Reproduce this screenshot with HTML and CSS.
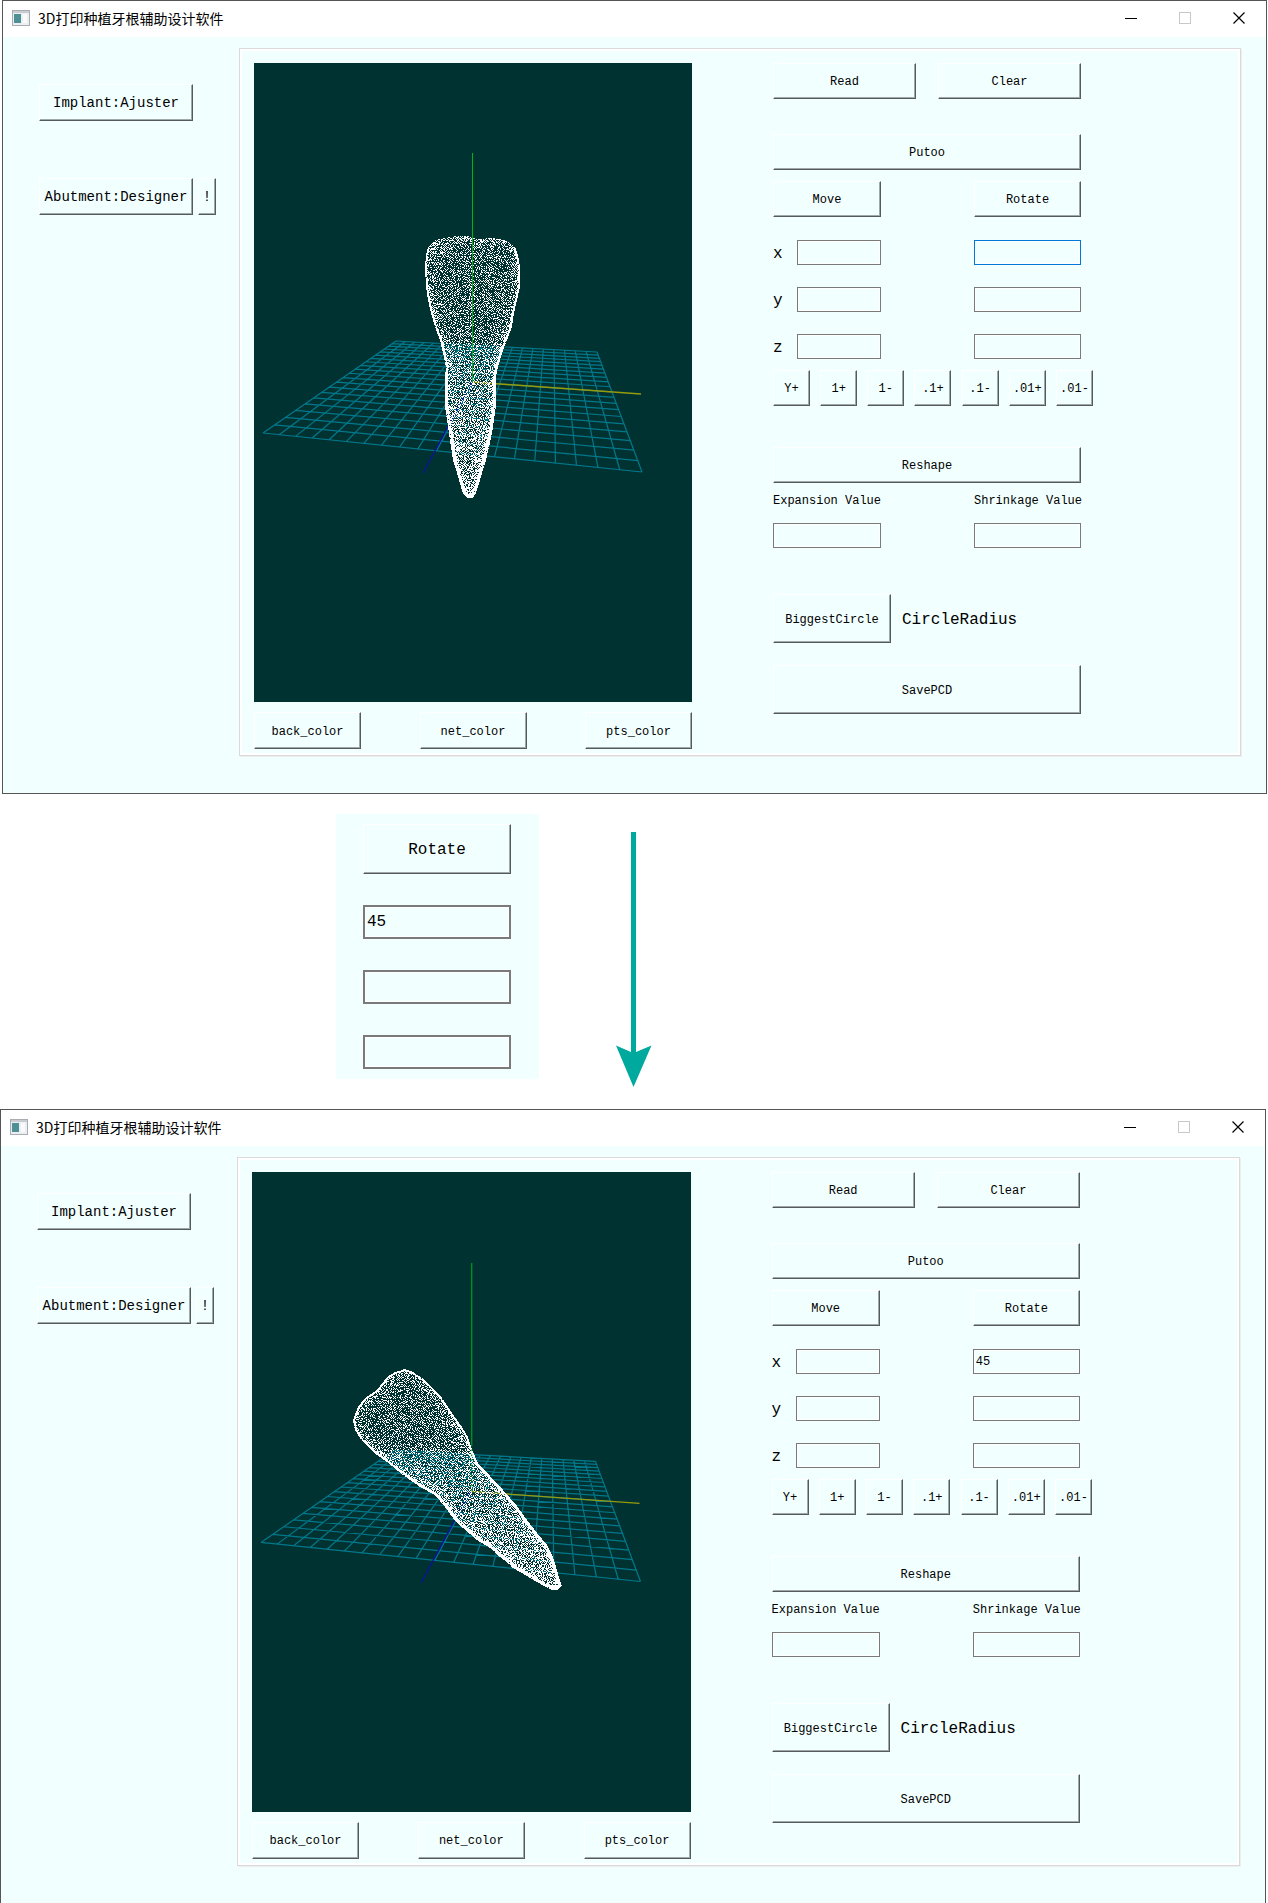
FILE: index.html
```html
<!DOCTYPE html>
<html lang="zh-CN">
<head>
<meta charset="utf-8">
<meta name="viewport" content="width=device-width, initial-scale=1">
<title>3D打印种植牙根辅助设计软件</title>
<link rel="stylesheet" href="styles.css">
</head>
<body>
<section class="window window-before">
  <header class="titlebar">
    <svg class="app-icon" viewBox="0 0 18 16" aria-hidden="true"><rect x="0.5" y="0.5" width="17" height="15" fill="#eceff1" stroke="#a9adb1"/><rect x="1" y="1" width="16" height="2" fill="#c9cdd1"/><rect x="2" y="4" width="7" height="9" fill="#4f8f96"/><rect x="11" y="4" width="4" height="9" fill="#fafafa"/></svg>
    <h1 class="title">3D打印种植牙根辅助设计软件</h1>
    <button class="caption" aria-label="Minimize"><svg viewBox="0 0 12 12"><path d="M0 6.5H12" stroke="#000"/></svg></button>
    <button class="caption" aria-label="Maximize" disabled><svg viewBox="0 0 12 12"><rect x="0.5" y="0.5" width="11" height="11" fill="none" stroke="#c8c8c8"/></svg></button>
    <button class="caption" aria-label="Close"><svg viewBox="0 0 12 12"><path d="M0.5 0.5L11.5 11.5M11.5 0.5L0.5 11.5" stroke="#000" stroke-width="1.2"/></svg></button>
  </header>
  <div class="window-body">
    <nav class="modules">
      <div class="module-row"><button class="btn module">Implant:Ajuster</button></div>
      <div class="module-row"><button class="btn module">Abutment:Designer</button><button class="btn hint">!</button></div>
    </nav>
    <main class="frame">
      <div class="viewer">
        <svg class="scene" data-tooth="upright" viewBox="0 0 438 639" role="img" aria-label="Tooth root point cloud"></svg>
        <div class="color-row">
          <button class="btn">back_color</button><button class="btn">net_color</button><button class="btn">pts_color</button>
        </div>
      </div>
      <div class="controls">
        <div class="file-row"><button class="btn">Read</button><button class="btn">Clear</button></div>
        <section class="group">
          <button class="btn wide">Putoo</button>
          <div class="pair"><button class="btn">Move</button><button class="btn">Rotate</button></div>
          <div class="axes">
            <div class="pair"><div class="axis"><label for="a-mx">x</label><input id="a-mx" class="field"></div><input class="field focused" aria-label="Rotate x"></div>
            <div class="pair"><div class="axis"><label for="a-my">y</label><input id="a-my" class="field"></div><input class="field" aria-label="Rotate y"></div>
            <div class="pair"><div class="axis"><label for="a-mz">z</label><input id="a-mz" class="field"></div><input class="field" aria-label="Rotate z"></div>
          </div>
          <div class="steps"><button class="btn">Y+</button><button class="btn">1+</button><button class="btn">1-</button><button class="btn">.1+</button><button class="btn">.1-</button><button class="btn">.01+</button><button class="btn">.01-</button></div>
        </section>
        <section class="reshape">
          <button class="btn wide">Reshape</button>
          <div class="pair values">
            <label class="value">Expansion Value<input class="field"></label>
            <label class="value">Shrinkage Value<input class="field"></label>
          </div>
        </section>
        <div class="circle-row"><button class="btn tall">BiggestCircle</button><span class="radius">CircleRadius</span></div>
        <button class="btn wide tall save">SavePCD</button>
      </div>
    </main>
  </div>
</section>

<section class="transition">
  <form class="rotate-card">
    <button type="button" class="btn large">Rotate</button>
    <input class="field large" aria-label="Rotate x" value="45">
    <input class="field large" aria-label="Rotate y">
    <input class="field large" aria-label="Rotate z">
  </form>
  <svg class="arrow" viewBox="0 0 36 256" aria-hidden="true"><path d="M15 0H20V220L35.5 213.5L17.5 255L0 213.5L15 220Z" fill="#00a99d"/></svg>
</section>

<section class="window window-after">
  <header class="titlebar">
    <svg class="app-icon" viewBox="0 0 18 16" aria-hidden="true"><rect x="0.5" y="0.5" width="17" height="15" fill="#eceff1" stroke="#a9adb1"/><rect x="1" y="1" width="16" height="2" fill="#c9cdd1"/><rect x="2" y="4" width="7" height="9" fill="#4f8f96"/><rect x="11" y="4" width="4" height="9" fill="#fafafa"/></svg>
    <h1 class="title">3D打印种植牙根辅助设计软件</h1>
    <button class="caption" aria-label="Minimize"><svg viewBox="0 0 12 12"><path d="M0 6.5H12" stroke="#000"/></svg></button>
    <button class="caption" aria-label="Maximize" disabled><svg viewBox="0 0 12 12"><rect x="0.5" y="0.5" width="11" height="11" fill="none" stroke="#c8c8c8"/></svg></button>
    <button class="caption" aria-label="Close"><svg viewBox="0 0 12 12"><path d="M0.5 0.5L11.5 11.5M11.5 0.5L0.5 11.5" stroke="#000" stroke-width="1.2"/></svg></button>
  </header>
  <div class="window-body">
    <nav class="modules">
      <div class="module-row"><button class="btn module">Implant:Ajuster</button></div>
      <div class="module-row"><button class="btn module">Abutment:Designer</button><button class="btn hint">!</button></div>
    </nav>
    <main class="frame">
      <div class="viewer">
        <svg class="scene" data-tooth="rotated" viewBox="0 0 438 639" role="img" aria-label="Rotated tooth root point cloud"></svg>
        <div class="color-row">
          <button class="btn">back_color</button><button class="btn">net_color</button><button class="btn">pts_color</button>
        </div>
      </div>
      <div class="controls">
        <div class="file-row"><button class="btn">Read</button><button class="btn">Clear</button></div>
        <section class="group">
          <button class="btn wide">Putoo</button>
          <div class="pair"><button class="btn">Move</button><button class="btn">Rotate</button></div>
          <div class="axes">
            <div class="pair"><div class="axis"><label for="b-mx">x</label><input id="b-mx" class="field"></div><input class="field" aria-label="Rotate x" value="45"></div>
            <div class="pair"><div class="axis"><label for="b-my">y</label><input id="b-my" class="field"></div><input class="field" aria-label="Rotate y"></div>
            <div class="pair"><div class="axis"><label for="b-mz">z</label><input id="b-mz" class="field"></div><input class="field" aria-label="Rotate z"></div>
          </div>
          <div class="steps"><button class="btn">Y+</button><button class="btn">1+</button><button class="btn">1-</button><button class="btn">.1+</button><button class="btn">.1-</button><button class="btn">.01+</button><button class="btn">.01-</button></div>
        </section>
        <section class="reshape">
          <button class="btn wide">Reshape</button>
          <div class="pair values">
            <label class="value">Expansion Value<input class="field"></label>
            <label class="value">Shrinkage Value<input class="field"></label>
          </div>
        </section>
        <div class="circle-row"><button class="btn tall">BiggestCircle</button><span class="radius">CircleRadius</span></div>
        <button class="btn wide tall save">SavePCD</button>
      </div>
    </main>
  </div>
</section>
<script src="scene.js"></script>
</body>
</html>
```

FILE: styles.css
```css
* {
  box-sizing: border-box;
}

body {
  margin: 0;
  background: #fff;
  color: #000;
  font: 12px/20px "Liberation Mono", "Noto Sans CJK SC", monospace;
}

button,
input {
  margin: 0;
  padding: 0;
  color: inherit;
  font: inherit;
}

/* Application window */
.window {
  border: 1px solid #555;
  background: #f2ffff;
}

.window-before {
  margin: 0 1px 0 2px;
}

.window-after {
  margin: 0 2px 0 0;
}

.titlebar {
  display: flex;
  align-items: center;
  height: 36px;
  padding: 0 0 2px 9px;
  background: #fff;
}

.app-icon {
  width: 18px;
  height: 16px;
}

.title {
  flex: 1;
  margin: 0 0 0 8px;
  font: 14px/20px "Noto Sans CJK SC", sans-serif;
}

.caption {
  display: flex;
  align-items: center;
  justify-content: center;
  width: 54px;
  height: 34px;
  border: 0;
  background: none;
}

.caption svg {
  width: 12px;
  height: 12px;
}

.window-body {
  display: flex;
  padding: 11px 25px 37px 0;
}

.modules {
  display: flex;
  flex: 0 0 236px;
  flex-direction: column;
  gap: 57px;
  padding: 36px 0 0 36px;
}

.module-row {
  display: flex;
  gap: 5px;
}

.frame {
  display: grid;
  flex: 1;
  grid-template-columns: 438fr 320fr;
  column-gap: 81px;
  align-items: start;
  padding: 14px 147px 6px 14px;
  border: 1px solid #dadada;
  box-shadow: inset 0 0 0 2px #fff, 1px 1px 0 #eee;
}

/* Controls */
.btn {
  height: 36px;
  padding-top: 2px;
  border: 1px solid #fff;
  border-right-color: #555b5b;
  border-bottom-color: #555b5b;
  background: #f2ffff;
  box-shadow: inset -1px -1px 0 #a0a9a9;
  text-align: center;
  white-space: nowrap;
}

.module,
.hint {
  height: 37px;
  padding-top: 0;
  font-size: 14px;
}

.module {
  width: 154px;
}

.hint {
  width: 18px;
}

.wide {
  width: 100%;
}

.tall {
  height: 49px;
}

.field {
  width: 100%;
  min-width: 0;
  height: 25px;
  padding-left: 2px;
  border: 1px solid #7a7a7a;
  border-radius: 0;
  outline: 0;
  background: #f2ffff;
  box-shadow: inset 0 0 0 1px #fff;
}

.focused {
  border-color: #0078d7;
}

.scene {
  display: block;
  width: 100%;
  background: #003232;
}

.color-row {
  display: flex;
  justify-content: space-between;
  margin-top: 10px;
}

.color-row .btn {
  width: 107px;
  height: 37px;
}

.controls {
  display: flex;
  flex-direction: column;
}

.file-row,
.group > .wide,
.pair,
.reshape,
.save {
  width: calc(100% - 12px);
}

.reshape .pair {
  width: 100%;
}

.file-row {
  display: grid;
  grid-template-columns: 1fr 1fr;
  gap: 22px;
}

.group {
  display: flex;
  flex-direction: column;
  gap: 11px;
  margin-top: 35px;
}

.pair {
  display: grid;
  grid-template-columns: minmax(0, 108fr) minmax(0, 107fr);
  column-gap: 93px;
}

.axes {
  display: grid;
  gap: 22px;
  margin-top: 12px;
}

.axis {
  display: flex;
}

.axis label {
  flex: 0 0 24px;
  height: 25px;
  font-size: 16px;
  line-height: 28px;
}

.steps {
  display: flex;
  justify-content: space-between;
}

.steps .btn {
  width: 37px;
}

.reshape {
  margin-top: 41px;
}

.values {
  margin-top: 8px;
}

.value {
  display: grid;
  grid-template-columns: minmax(0, 1fr);
  gap: 12px;
  white-space: nowrap;
}

.circle-row {
  display: flex;
  align-items: center;
  gap: 11px;
  margin: 46px 0 22px;
}

.circle-row .btn {
  width: 118px;
}

.radius {
  padding-top: 2px;
  font-size: 16px;
}

/* Step between the two windows */
.transition {
  display: flex;
  align-items: flex-start;
  gap: 77px;
  padding: 20px 0 30px 336px;
}

.rotate-card {
  display: flex;
  flex-direction: column;
  gap: 31px;
  width: 203px;
  padding: 10px 28px 10px 27px;
  background: #f2ffff;
  font-size: 16px;
}

.btn.large {
  height: 50px;
}

.field.large {
  height: 34px;
  border-width: 2px;
}

.arrow {
  width: 36px;
  height: 256px;
  margin-top: 18px;
  margin-bottom: -9px;
}
```

FILE: scene.js
```js
const SVG = "http://www.w3.org/2000/svg";

// Projected corners of the floor grid: back left, back right, front right, front left.
const FLOOR = [[142, 278], [343, 289], [388, 409], [9, 370]];
const CELLS = 20;

const OUTLINES = {
  upright: [
    [196, 174], [204, 173], [214, 173], [222, 176], [240, 175], [250, 177], [261, 183], [264, 192],
    [266, 204], [266, 224], [263, 237], [260, 250], [258, 264], [253, 277], [248, 290],
    [244, 304], [242, 314], [242, 343], [240, 357], [238, 370], [235, 384], [232, 397], [228, 410],
    [224, 424], [222, 430], [219, 435], [214, 435], [209, 430], [207, 424], [203, 410], [199, 397],
    [197, 384], [195, 370], [193, 357], [191, 343], [191, 314], [192, 304], [189, 290], [186, 277],
    [181, 264], [177, 250], [174, 237], [172, 224], [171, 204], [172, 192], [174, 184], [182, 177]
  ],
  rotated: [
    [153, 197], [161, 200], [170, 206], [180, 215], [190, 226], [200, 241], [210, 255], [216, 265],
    [220, 278], [226, 291], [238, 304], [251, 318], [265, 334], [275, 348], [285, 361], [295, 373],
    [301, 385], [306, 401], [310, 413], [306, 417], [300, 417], [288, 411], [275, 403], [261, 395],
    [248, 385], [238, 376], [225, 368], [211, 356], [201, 346], [193, 335], [183, 323], [168, 315],
    [151, 303], [135, 290], [121, 280], [108, 266], [103, 258], [101, 248], [106, 235], [113, 226],
    [125, 218], [135, 205], [143, 200]
  ]
};

function add(svg, d, attrs) {
  const path = document.createElementNS(SVG, "path");
  path.setAttribute("d", d);
  for (const key in attrs) path.setAttribute(key, attrs[key]);
  svg.appendChild(path);
}

// Unit square to quadrilateral, with perspective.
function projector([p0, p1, p2, p3]) {
  const dx1 = p1[0] - p2[0], dx2 = p3[0] - p2[0], sx = p0[0] - p1[0] + p2[0] - p3[0];
  const dy1 = p1[1] - p2[1], dy2 = p3[1] - p2[1], sy = p0[1] - p1[1] + p2[1] - p3[1];
  const det = dx1 * dy2 - dx2 * dy1;
  const g = (sx * dy2 - dx2 * sy) / det, h = (dx1 * sy - sx * dy1) / det;
  return (u, v) => {
    const w = g * u + h * v + 1;
    return [
      ((p1[0] - p0[0] + g * p1[0]) * u + (p3[0] - p0[0] + h * p3[0]) * v + p0[0]) / w,
      ((p1[1] - p0[1] + g * p1[1]) * u + (p3[1] - p0[1] + h * p3[1]) * v + p0[1]) / w
    ];
  };
}

function inside(poly, x, y) {
  let hit = false;
  for (let i = 0, j = poly.length - 1; i < poly.length; j = i++) {
    const [ax, ay] = poly[i], [bx, by] = poly[j];
    if (ay > y !== by > y && x < (bx - ax) * (y - ay) / (by - ay) + ax) hit = !hit;
  }
  return hit;
}

function edgeDistance(poly, x, y) {
  let best = Infinity;
  for (let i = 0, j = poly.length - 1; i < poly.length; j = i++) {
    const [ax, ay] = poly[j], dx = poly[i][0] - ax, dy = poly[i][1] - ay;
    const t = Math.max(0, Math.min(1, ((x - ax) * dx + (y - ay) * dy) / (dx * dx + dy * dy)));
    best = Math.min(best, Math.hypot(x - ax - t * dx, y - ay - t * dy));
  }
  return best;
}

function pointCloud(poly) {
  let seed = 12345, d = "";
  const random = () => (seed = (seed * 1103515245 + 12345) % 2147483648) / 2147483648;
  const filled = new Set();
  for (let y = 172; y < 437; y++) {
    for (let x = 98; x < 314; x++) {
      if (!inside(poly, x + 0.5, y + 0.5)) continue;
      const depth = Math.max(0, Math.min(1, (y - 260) / 110));
      const edge = edgeDistance(poly, x + 0.5, y + 0.5);
      let chance = 0.2 + 0.3 * depth + 0.45 * Math.exp(-edge / 5);
      // Neighbouring points keep some distance from each other.
      const near = filled.has(x - 1 + "," + y) + filled.has(x + "," + (y - 1));
      chance += near === 0 ? 0.2 : near === 2 ? -0.15 : 0;
      if (edge < 2 + depth * 1.5 && y > 184) chance = 0.98;
      if (random() < chance) {
        filled.add(x + "," + y);
        d += `M${x} ${y}h1v1h-1z`;
      }
    }
  }
  return d;
}

for (const svg of document.querySelectorAll(".scene")) {
  const at = projector(FLOOR);
  let grid = "";
  for (let i = 0; i <= CELLS; i++) {
    const t = i / CELLS;
    grid += `M${at(t, 0)}L${at(t, 1)}M${at(0, t)}L${at(1, t)}`;
  }
  add(svg, grid, { stroke: "#00788c", "stroke-width": 1.2, fill: "none" });
  add(svg, "M218 319L387 331", { stroke: "#969b0c", "stroke-width": 1.4 });
  add(svg, "M218 319L169 410", { stroke: "#0a149b", "stroke-width": 1.4 });
  add(svg, pointCloud(OUTLINES[svg.dataset.tooth]), { fill: "#fff", "shape-rendering": "crispEdges" });
  add(svg, svg.dataset.tooth === "upright" ? "M218.5 90V319" : "M219.5 91V272", { stroke: "#00b414" });
  if (svg.dataset.tooth === "rotated") {
    add(svg, "M219.5 272V319", { stroke: "#00b414", "stroke-dasharray": "2 3" });
  }
}
```
